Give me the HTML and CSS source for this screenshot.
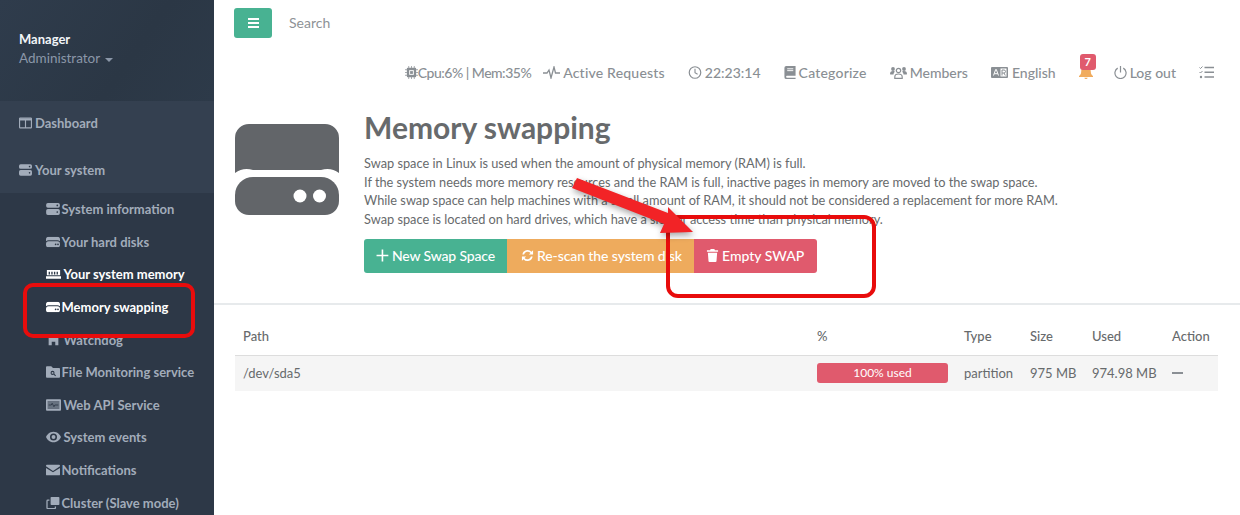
FILE: index.html
```html
<!DOCTYPE html>
<html lang="en">
<head>
  <meta charset="UTF-8" />
  <title>Memory swapping</title>
  <meta name="viewport" content="width=device-width, initial-scale=1.0" />
  <link rel="stylesheet" href="styles.css">
</head>
<body>
  <svg class="sprite" width="0" height="0">
    <symbol id="i-server" viewBox="0 0 16 14">
      <path d="M2 0h12a2 2 0 0 1 2 2v1.6a2 2 0 0 1-2 2H2a2 2 0 0 1-2-2V2a2 2 0 0 1 2-2zM2 7h12a2 2 0 0 1 2 2v3a2 2 0 0 1-2 2H2a2 2 0 0 1-2-2V9a2 2 0 0 1 2-2z"/>
      <circle cx="13" cy="2.8" r="1" fill="#2d3847"/><circle cx="13" cy="10.5" r="1" fill="#2d3847"/>
    </symbol>
    <symbol id="i-hdd" viewBox="0 0 16 12">
      <path d="M3 0h10a3 3 0 0 1 3 3v2a5 5 0 0 0-3-1H3a5 5 0 0 0-3 1V3a3 3 0 0 1 3-3zM3 5.2h10a3 3 0 0 1 3 3V9a3 3 0 0 1-3 3H3a3 3 0 0 1-3-3v-.8a3 3 0 0 1 3-3z"/>
      <circle cx="11" cy="8.700" r="1" fill="#2d3847"/><circle cx="13.700" cy="8.700" r="1" fill="#2d3847"/>
    </symbol>
  </svg>

  <div class="layout">
    <aside class="sidebar">
      <div class="profile">
        <div class="profile-name">Manager</div>
        <div class="profile-role">Administrator <span class="caret"></span></div>
      </div>
      <ul class="nav">
        <li class="nav-item">
          <svg class="nav-icon" viewBox="0 0 16 14"><path d="M1.500 1h13a.8.8 0 0 1 .8.8v10.400a.8.8 0 0 1-.8.8h-13a.8.8 0 0 1-.8-.8V1.800a.8.8 0 0 1 .8-.8z" fill="none" stroke="currentColor" stroke-width="1.400"/><path d="M0 1.500h16v2.500H0zM7.300 3h1.400v10H7.300z"/></svg>
          Dashboard
        </li>
        <li class="nav-item">
          <svg class="nav-icon"><use href="#i-server"/></svg>
          Your system
        </li>
      </ul>
      <ul class="subnav">
        <li class="sub-item"><svg class="sub-icon"><use href="#i-server"/></svg>System information</li>
        <li class="sub-item"><svg class="sub-icon" viewBox="0 0 16 12"><use href="#i-hdd"/></svg>Your hard disks</li>
        <li class="sub-item active">
          <svg class="sub-icon wide" viewBox="0 0 17 11"><path d="M1 1h15v6H1zM0 8h17v3H0z"/><path d="M3 3h1.500v3H3zM6 3h1.500v3H6zM9 3h1.500v3H9zM12 3h1.500v3H12z" fill="#2d3847"/></svg>
          Your system memory
        </li>
        <li class="sub-item active"><svg class="sub-icon" viewBox="0 0 16 12"><use href="#i-hdd"/></svg>Memory swapping</li>
        <li class="sub-item">
          <svg class="sub-icon wide" viewBox="0 0 17 12"><path d="M3 1h11v11h-3.500V8h-4v4H3z"/></svg>
          Watchdog
        </li>
        <li class="sub-item">
          <svg class="sub-icon" viewBox="0 0 16 13"><path d="M1 0h5l2 2h7a1 1 0 0 1 1 1v9a1 1 0 0 1-1 1H1a1 1 0 0 1-1-1V1a1 1 0 0 1 1-1z"/><circle cx="7.500" cy="7.500" r="1.700" fill="none" stroke="#2d3847" stroke-width="1.200"/><path d="M9 9l2 2" stroke="#2d3847" stroke-width="1.200"/></svg>
          File Monitoring service
        </li>
        <li class="sub-item">
          <svg class="sub-icon wide" viewBox="0 0 17 13"><path fill-rule="evenodd" d="M1 0h15a1 1 0 0 1 1 1v11a1 1 0 0 1-1 1H1a1 1 0 0 1-1-1V1a1 1 0 0 1 1-1zm1 2v9h13V2z"/><path d="M2 2h13v9H2z" opacity=".5"/><path d="M3 6.500h3l1-2 2 4 1-2h4" fill="none" stroke="#2d3847"/></svg>
          Web API Service
        </li>
        <li class="sub-item">
          <svg class="sub-icon wide" viewBox="0 0 17 12"><path fill-rule="evenodd" d="M8.500 0C13 0 16 3.500 17 6c-1 2.500-4 6-8.500 6S1 8.500 0 6c1-2.500 4-6 8.500-6zm0 2a4 4 0 1 0 0 8 4 4 0 0 0 0-8z"/><circle cx="8.500" cy="6" r="2.200"/></svg>
          System events
        </li>
        <li class="sub-item">
          <svg class="sub-icon" viewBox="0 0 16 12"><path d="M1 0h14a1 1 0 0 1 1 1v.8L8 7 0 1.800V1a1 1 0 0 1 1-1zM0 3.600l8 5 8-5V11a1 1 0 0 1-1 1H1a1 1 0 0 1-1-1z"/></svg>
          Notifications
        </li>
        <li class="sub-item">
          <svg class="sub-icon" viewBox="0 0 16 15"><path d="M6 0h9a1 1 0 0 1 1 1v8a1 1 0 0 1-1 1H6a1 1 0 0 1-1-1V1a1 1 0 0 1 1-1z"/><path d="M3.500 4H1.500a1 1 0 0 0-1 1v8.500a1 1 0 0 0 1 1H10a1 1 0 0 0 1-1v-1.500" fill="none" stroke="currentColor" stroke-width="1.600"/></svg>
          Cluster (Slave mode)
        </li>
      </ul>
    </aside>

    <main class="content">
      <div class="topbar">
        <button class="menu-btn" type="button"><span></span><span></span><span></span></button>
        <span class="search">Search</span>
      </div>

      <div class="stats">
        <span class="stat stat-cpu">
          <svg class="stat-icon icon-13" viewBox="0 0 14 14"><path d="M3 2h8a1 1 0 0 1 1 1v8a1 1 0 0 1-1 1H3a1 1 0 0 1-1-1V3a1 1 0 0 1 1-1z"/><path d="M4 0v14M7 0v14M10 0v14M0 4h14M0 7h14M0 10h14" stroke="currentColor" stroke-width=".8"/><path d="M4.500 4.500h5v5h-5z" fill="#fff"/><path d="M5.500 5.500h3v3h-3z"/></svg>
          Cpu:6% | Mem:35%
        </span>
        <span class="stat stat-wide">
          <svg class="stat-icon icon-17" viewBox="0 0 17 12"><path d="M0 6.500h4l2-3 2 8 3-11 1.500 6H17" fill="none" stroke="currentColor" stroke-width="1.300"/></svg>
          Active Requests
        </span>
        <span class="stat">
          <svg class="stat-icon icon-14" viewBox="0 0 14 14"><circle cx="7" cy="7" r="6.200" fill="none" stroke="currentColor" stroke-width="1.300"/><path d="M7 3v4.300l2.800 1.500" fill="none" stroke="currentColor" stroke-width="1.200"/></svg>
          22:23:14
        </span>
        <span class="stat stat-wide">
          <svg class="stat-icon icon-12" viewBox="0 0 12 14"><path d="M2 0h10v10.500H2.500a1.200 1.200 0 0 0 0 2.200H12V14H2a2 2 0 0 1-2-2V2a2 2 0 0 1 2-2z"/><path d="M3 3h6.500M3 5h6.500" stroke="#fff"/></svg>
          Categorize
        </span>
        <span class="stat">
          <svg class="stat-icon icon-17" viewBox="0 0 17 13"><circle cx="3" cy="3" r="1.900"/><circle cx="14" cy="3" r="1.900"/><path d="M0 8c0-2 1-3 3-3 1 0 1.500.3 2 .8C4 6.500 3.500 7.500 3.500 8.500H1a1 1 0 0 1-1-.5zM17 8c0-2-1-3-3-3-1 0-1.500.3-2 .8 1 .7 1.500 1.700 1.500 2.700H16a1 1 0 0 0 1-.5z"/><circle cx="8.500" cy="4.500" r="2.200" fill="none" stroke="currentColor" stroke-width="1.200"/><path d="M4.800 12.400v-1.400c0-2 1.200-3 3.700-3s3.700 1 3.700 3v1.400z" fill="none" stroke="currentColor" stroke-width="1.200"/></svg>
          Members
        </span>
        <span class="stat stat-lang">
          <svg class="stat-icon icon-17" viewBox="0 0 17 11"><path d="M1 0h15a1 1 0 0 1 1 1v9a1 1 0 0 1-1 1H1a1 1 0 0 1-1-1V1a1 1 0 0 1 1-1z"/><path d="M9.500 1.500h6v8h-6z" fill="#fff"/><path d="M2.500 8.500L4.700 2.500h.6l2.200 6M3.300 6.700h3.400" fill="none" stroke="#fff" stroke-width="1"/><path d="M11 8.500v-5.500h2a1.400 1.400 0 0 1 0 3h-2M13 6l1.300 2.500" fill="none" stroke="currentColor" stroke-width="1"/></svg>
          English
        </span>
        <span class="stat stat-bell">
          <svg class="bell" viewBox="0 0 14 14"><path d="M7 0c.6 0 1 .4 1 1v.6c2.300.5 3.800 2.400 3.800 4.800 0 2.500.9 3.600 2.200 4.600v1H0v-1c1.300-1 2.200-2.100 2.200-4.600 0-2.400 1.500-4.300 3.800-4.800V1c0-.6.4-1 1-1z"/><path d="M5.300 12.800h3.400A1.700 1.700 0 0 1 7 14a1.700 1.700 0 0 1-1.700-1.200z"/></svg>
          <span class="badge">7</span>
        </span>
        <span class="stat">
          <svg class="stat-icon icon-13" viewBox="0 0 14 14"><path d="M4 2.300a6 6 0 1 0 6 0" fill="none" stroke="currentColor" stroke-width="1.300"/><path d="M7 0v7" stroke="currentColor" stroke-width="1.300"/></svg>
          Log out
        </span>
        <span class="stat">
          <svg class="stat-icon icon-15" viewBox="0 0 15 13"><path d="M.5 1.500l1 1 2-2M.5 6l1 1 2-2" fill="none" stroke="currentColor" stroke-width="1"/><circle cx="2" cy="11" r="1.200"/><path d="M5.500 1.500H15M5.500 6.300H15M5.500 11H15" stroke="currentColor" stroke-width="1.500"/></svg>
        </span>
      </div>

      <section class="page-head">
        <svg class="page-icon" viewBox="0 0 104 91">
          <path d="M14 0h76a14 14 0 0 1 14 14v35a20 20 0 0 0-18-3H18a20 20 0 0 0-18 3V14A14 14 0 0 1 14 0z"/>
          <path d="M18 53h68a18 18 0 0 1 18 18v6a14 14 0 0 1-14 14H14A14 14 0 0 1 0 77v-6a18 18 0 0 1 18-18z"/>
          <circle cx="65" cy="72" r="6.500" fill="#fff"/><circle cx="84.500" cy="72" r="6.500" fill="#fff"/>
        </svg>
        <div class="page-text">
          <h1>Memory swapping</h1>
          <p>Swap space in Linux is used when the amount of physical memory (RAM) is full.</p>
          <p>If the system needs more memory resources and the RAM is full, inactive pages in memory are moved to the swap space.</p>
          <p>While swap space can help machines with a small amount of RAM, it should not be considered a replacement for more RAM.</p>
          <p>Swap space is located on hard drives, which have a slower access time than physical memory.</p>
          <div class="btn-group">
            <button type="button" class="btn btn-green">
              <svg class="btn-icon" viewBox="0 0 12 12"><path d="M6 .5v11M.5 6h11" fill="none" stroke="currentColor" stroke-width="1.500"/></svg>
              New Swap Space
            </button>
            <button type="button" class="btn btn-orange">
              <svg class="btn-icon" viewBox="0 0 14 14"><path d="M1.500 6A5.600 5.600 0 0 1 11.300 3L13 1.300V6H8.500l1.700-1.700A4 4 0 0 0 3.300 6zM12.500 8A5.600 5.600 0 0 1 2.700 11L1 12.700V8h4.500l-1.700 1.700A4 4 0 0 0 10.700 8z"/></svg>
              Re-scan the system disk
            </button>
            <button type="button" class="btn btn-red">
              <svg class="btn-icon" viewBox="0 0 12 14"><path d="M4 0h4l.6 1.300H12v1.700H0V1.300h3.400zM1 4h10l-.7 9a1 1 0 0 1-1 1H2.700a1 1 0 0 1-1-1z"/></svg>
              Empty SWAP
            </button>
          </div>
        </div>
      </section>

      <section class="table-wrap">
        <table class="swap-table">
          <thead>
            <tr>
              <th class="col-path">Path</th>
              <th class="col-pct">%</th>
              <th class="col-type">Type</th>
              <th class="col-size">Size</th>
              <th class="col-used">Used</th>
              <th>Action</th>
            </tr>
          </thead>
          <tbody>
            <tr>
              <td>/dev/sda5</td>
              <td><div class="usage">100% used</div></td>
              <td>partition</td>
              <td>975 MB</td>
              <td>974.98 MB</td>
              <td><span class="dash"></span></td>
            </tr>
          </tbody>
        </table>
      </section>
    </main>
  </div>

  <!-- annotations drawn on top of the screenshot -->
  <div class="mark mark-side"></div>
  <div class="mark mark-btn"></div>
  <svg class="arrow" viewBox="0 0 140 70">
    <path d="M17 8L108 43V37L133 62L100 63L104 54L12 18z" fill="#f22326"/>
  </svg>
</body>
</html>
```

FILE: styles.css
```css
* {
  box-sizing: border-box;
}

html, body {
  margin: 0;
  height: 515px;
  overflow: hidden;
}

body {
  font-family: 'Lato', 'Open Sans', sans-serif;
  font-size: 13px;
  color: #676a6c;
  background-color: #fff;
}

.sprite {
  display: none;
}

.layout {
  display: flex;
  height: 515px;
}

/* sidebar */
.sidebar {
  width: 214px;
  flex-shrink: 0;
  background-color: #2d3847;
  color: #a7b1c2;
}

.profile {
  height: 101px;
  padding: 31px 19px 0;
  background: linear-gradient(125deg, #2f3c4c 0%, #2b3745 60%, #2d3a49 100%);
}

.profile-name {
  color: #f2f5f8;
  font-weight: 700;
  line-height: 17px;
}

.profile-role {
  margin-top: 1px;
  color: #8b97a8;
  font-size: 13.5px;
  line-height: 18px;
}

.caret {
  display: inline-block;
  margin-left: 2px;
  vertical-align: middle;
  border-top: 4px solid #8b97a8;
  border-left: 4px solid transparent;
  border-right: 4px solid transparent;
}

.nav, .subnav {
  list-style: none;
  margin: 0;
  padding: 0;
  font-weight: 700;
}

.nav {
  height: 92px;
  background-color: #344050;
}

.nav-item {
  display: flex;
  align-items: center;
  gap: 3px;
  height: 47px;
  padding: 0 0 4px 19px;
  color: #a2acba;
}

.nav-icon {
  width: 13px;
  height: 12px;
  fill: currentColor;
}

.sub-item {
  display: flex;
  align-items: center;
  gap: 1.500px;
  height: 32.600px;
  padding-left: 46px;
  color: #a2acba;
  white-space: nowrap;
}

.sub-item.active {
  color: #fff;
}

.sub-icon {
  width: 14px;
  height: 12px;
  fill: currentColor;
}

.sub-icon.wide {
  width: 15px;
  margin-right: 1px;
}

/* top bar */
.content {
  flex: 1;
  min-width: 0;
}

.topbar {
  display: flex;
  align-items: center;
  height: 46px;
  padding-left: 20px;
}

.menu-btn {
  display: flex;
  flex-direction: column;
  justify-content: center;
  align-items: center;
  gap: 2px;
  width: 38px;
  height: 30px;
  padding: 0;
  border: none;
  border-radius: 3px;
  background-color: #48b292;
}

.menu-btn span {
  display: block;
  width: 11px;
  height: 2px;
  background-color: #fff;
}

.search {
  margin: 0 0 2px 17px;
  color: #8e9296;
  font-size: 14px;
}

.stats {
  display: flex;
  justify-content: flex-end;
  align-items: center;
  gap: 23px;
  height: 54px;
  padding: 0 26px 2px 0;
  color: #8a8f94;
  font-size: 14px;
  font-weight: 500;
}

.stat {
  display: flex;
  align-items: center;
  gap: 3px;
  white-space: nowrap;
}

.stat-cpu {
  margin-right: -11px;
  gap: 0;
  letter-spacing: -0.5px;
}

.stat-wide {
  letter-spacing: 0.2px;
}

.stat-lang {
  gap: 4px;
}

.stat-icon {
  height: 13px;
  fill: currentColor;
}

.icon-12 { width: 12px; }
.icon-13 { width: 13px; }
.icon-14 { width: 14px; }
.icon-15 { width: 15px; }
.icon-17 { width: 17px; }

.stat-bell {
  position: relative;
  width: 12px;
  height: 16px;
}

.bell {
  position: absolute;
  left: 0;
  top: 1px;
  width: 14px;
  height: 14px;
  fill: #f0ab5d;
}

.badge {
  position: absolute;
  left: 1px;
  top: -10px;
  width: 16px;
  height: 16px;
  border-radius: 3px;
  background-color: #e05a6d;
  color: #fff;
  font-size: 11px;
  font-weight: 700;
  line-height: 16px;
  text-align: center;
}

/* page header */
.page-head {
  display: flex;
  gap: 25px;
  height: 205px;
  padding: 24px 0 0 21px;
  border-bottom: 2px solid #e7eaec;
}

.page-icon {
  width: 104px;
  height: 91px;
  flex-shrink: 0;
  fill: #626569;
}

.page-text h1 {
  margin: -17px 0 7px;
  font-size: 30px;
  font-weight: 700;
  line-height: 40px;
  color: #676a6c;
}

.page-text p {
  margin: 0;
  font-size: 12.770px;
  line-height: 18.500px;
  white-space: nowrap;
}

.btn-group {
  display: flex;
  margin-top: 11px;
}

.btn {
  display: flex;
  align-items: center;
  gap: 3px;
  height: 34px;
  padding: 0 12px 1px;
  border: none;
  color: #fff;
  font-family: inherit;
  font-size: 14px;
  font-weight: 500;
  white-space: nowrap;
}

.btn-icon {
  height: 13px;
  width: 13px;
  fill: currentColor;
}

.btn-green {
  width: 143px;
  background-color: #48b292;
  border-radius: 3px 0 0 3px;
  letter-spacing: -0.15px;
}

.btn-orange {
  width: 187px;
  padding-left: 14px;
  background-color: #eeab5d;
  letter-spacing: -0.1px;
}

.btn-red {
  width: 123px;
  background-color: #e05a6d;
  border-radius: 0 3px 3px 0;
}

/* table */
.table-wrap {
  padding: 13px 22px 0 21px;
}

.swap-table {
  width: 100%;
  table-layout: fixed;
  border-collapse: collapse;
}

.swap-table th {
  height: 37px;
  padding: 0 8px;
  border-bottom: 1px solid #ddd;
  font-weight: 500;
  text-align: left;
}

.swap-table td {
  height: 36px;
  padding: 0 8px;
  background-color: #f5f5f5;
  white-space: nowrap;
}

.col-path { width: 574px; }
.col-pct { width: 147px; }
.col-type { width: 66px; }
.col-size { width: 62px; }
.col-used { width: 80px; }

.usage {
  height: 20px;
  border-radius: 3px;
  background-color: #e05a6d;
  color: #fff;
  font-size: 12px;
  line-height: 20px;
  text-align: center;
}

.dash {
  display: block;
  width: 11px;
  height: 2px;
  background-color: #8a8f94;
}

/* red annotations */
.mark {
  position: absolute;
  border: 4.500px solid #e80c0c;
}

.mark-side {
  left: 23px;
  top: 283px;
  width: 172px;
  height: 55px;
  border-radius: 10px;
}

.mark-btn {
  left: 666px;
  top: 215px;
  width: 210px;
  height: 83px;
  border-radius: 12px;
}

.arrow {
  position: absolute;
  left: 560px;
  top: 170px;
  width: 140px;
  height: 70px;
  overflow: visible;
  filter: drop-shadow(1px 3px 3px rgba(0, 0, 0, 0.35));
}
```
